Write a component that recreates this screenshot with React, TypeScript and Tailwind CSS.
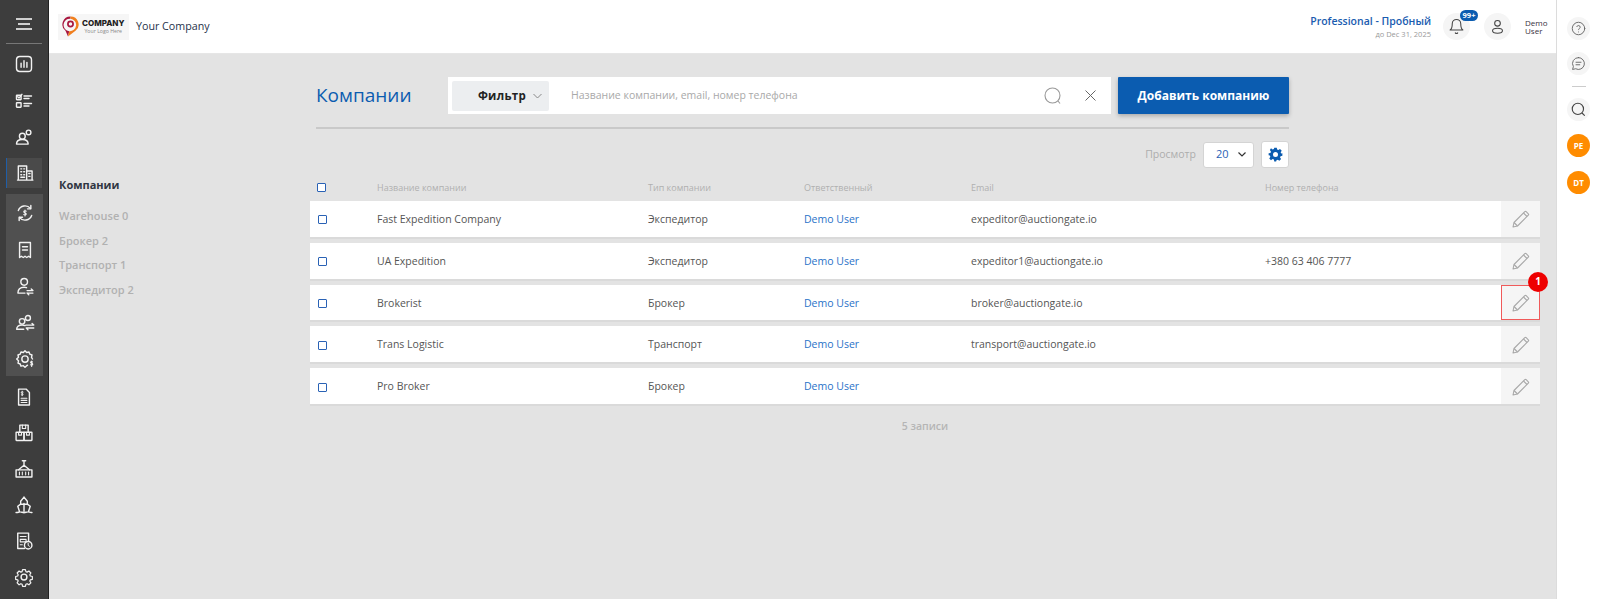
import React from "react";

const S = ({ children, size = 20, className = "" }: { children: React.ReactNode; size?: number; className?: string }) => (
  <svg width={size} height={size} viewBox="0 0 24 24" fill="none" stroke="currentColor" strokeWidth={1.7} strokeLinecap="round" strokeLinejoin="round" className={className}>
    {children}
  </svg>
);

const sideTop = [
  <S key="a"><rect x="3" y="3" width="18" height="18" rx="4" /><path d="M8.500 16v-5M12 16V8M15.500 16v-6" /></S>,
  <S key="b"><rect x="3" y="5" width="5.500" height="5.500" rx=".5" /><path d="M4.500 7l1.500 1.500L9.500 4M12 6h9M12 9h6" /><rect x="3" y="14" width="5.500" height="5.500" rx=".5" /><path d="M12 15h9M12 18h6" /></S>,
  <S key="c"><circle cx="10" cy="11" r="3.500" /><path d="M3 20.500c0-3.500 3-5.500 7-5.500s7 2 7 5.500z" /><circle cx="17.500" cy="6.500" r="2.800" /></S>,
];
const building = <S><path d="M4 20.500V3.500h10v17zM14 9.500h6.500v11H14M3 20.500h18.500" /><path d="M7 7h1M10.500 7h1M7 10.500h1M10.500 10.500h1M7 14h1M10.500 14h1M7 17h4.500M16.500 12.500h1.500M16.500 16h1.500" /></S>;
const group = [
  <S key="a"><path d="M4 9A8.500 8.500 0 0 1 18.500 6.500M20 15A8.500 8.500 0 0 1 5.500 17.500" /><path d="M19 3v4h-4M5 21v-4h4" /><path d="M13.500 9.700c-1-.7-3-.6-3 .8 0 1.500 3 .9 3 2.600 0 1.400-2 1.500-3 .8M12 8.500v7" strokeWidth={1.3} /></S>,
  <S key="b"><path d="M5.500 3h13v18l-2.200-1.500-2.200 1.500-2.100-1.500L9.900 21l-2.200-1.500L5.500 21z" /><path d="M9 8h6M9 12h6" /></S>,
  <S key="c"><circle cx="11" cy="7" r="4" /><path d="M3.500 20.500c0-4.500 3.200-7 7.500-7 1 0 2 .2 2.800.5M3.500 20.500h8.500M14.500 17.500h7M19.500 15.500l2 2M21.500 20.500h-7M16.500 22.500l-2-2" /></S>,
  <S key="d"><circle cx="8.500" cy="10" r="3.300" /><circle cx="15.500" cy="6" r="3" /><path d="M2 19.500c0-3 2.700-5.200 6.500-5.200 1.300 0 2.500.3 3.500.8M2 19.500h8.500M13 14.500h9.500M20.500 12.500l2 2M22.500 18h-9M15.500 20l-2-2" /></S>,
  <S key="e"><path d="M15 19.500l-1 .5-2 2-2-2-2.800.6-1-2.600-2.600-1 .6-2.800L2 12l2.200-2-.6-2.800 2.600-1 1-2.600 2.800.6L12 2l2 2.200 2.800-.6 1 2.600 2.600 1-.6 2.800L21 12" /><circle cx="12" cy="12" r="3.800" /><path d="M21 15.500c-.8-.6-2.300-.5-2.300.6 0 1.300 2.600.8 2.600 2.200 0 1.100-1.700 1.200-2.600.6M20 14.500v6.500" strokeWidth={1.3} /></S>,
];
const sideBottom = [
  <S key="a"><path d="M5.500 2.500h9l4 4V21.500h-13z" /><path d="M11 6c-.8-.5-2.300-.4-2.300.7 0 1.200 2.300.8 2.300 2 0 1-1.500 1.100-2.300.6M9.800 5v5.500" strokeWidth={1.1} /><path d="M8.500 13.500h7M8.500 16h7M8.500 18.500h7" strokeWidth={1.3} /></S>,
  <S key="b"><path d="M7 11V2.500h10V11" /><rect x="2.500" y="11" width="9.500" height="10" rx=".5" /><rect x="12" y="11" width="9.500" height="10" rx=".5" /><path d="M10 2.500v4h4v-4M5.500 11v3.500h3.500V11M15 11v3.500h3.500V11" strokeWidth={1.3} /></S>,
  <S key="c"><path d="M12 2V7.500M10 2h4M12 7.500L5.500 13M12 7.500L18.500 13" /><rect x="2.500" y="13" width="19" height="8.500" /><path d="M6.500 15.500V19M10 15.500V19M14 15.500V19M17.500 15.500V19" strokeWidth={1.3} /></S>,
  <S key="d"><path d="M12 2.500l4 5v3.500l3.500 2.500-2 6M12 2.500L8 7.500V11l-3.500 2.500 2 6M12 10v9.500M2.500 21c2 .5 3-.8 4.800-.8s3 1 4.700 1 3-1 4.700-1 2.800 1.300 4.800.8" /><path d="M8 11h8" /></S>,
  <S key="e"><path d="M17.500 12V2.500h-13V21h8" /><path d="M7.500 6.500h7M7.500 10h7v3h-7zM7.500 16.500h2.500" strokeWidth={1.3} /><circle cx="17" cy="17" r="4.500" /><path d="M17 14.800v2.500l1.500 1" strokeWidth={1.2} /></S>,
];
const gear = (
  <S size={20}>
    <circle cx="12" cy="12" r="3.500" />
    <path d="M10 2.500h4l.7 2.900 1.700.7 2.500-1.500 2.800 2.800-1.500 2.500.7 1.700 2.900.7v4l-2.900.7-.7 1.700 1.500 2.500-2.800 2.800-2.500-1.500-1.700.7-.7 2.900h-4l-.7-2.900-1.700-.7-2.500 1.500-2.800-2.800 1.500-2.500-.7-1.700-2.900-.7v-4l2.900-.7.7-1.700-1.500-2.500 2.800-2.800 2.500 1.500 1.700-.7z" transform="translate(12 12) scale(.85) translate(-12 -13)" />
  </S>
);

const Box = ({ className = "" }: { className?: string }) => (
  <span className={`block w-[9px] h-[9px] rounded-[1px] border border-[#2a62b5] bg-white ${className}`} />
);

const Pencil = () => (
  <svg width="19" height="19" viewBox="0 0 19 19" fill="none" stroke="#a8a8a8" strokeWidth="1.100" strokeLinejoin="round">
    <path d="M2 17l1-4.500L13.800 1.700a1 1 0 0 1 1.400 0l2.100 2.100a1 1 0 0 1 0 1.400L6.500 16z" />
    <path d="M3 12.500L6.500 16M12.500 3l3.500 3.500" />
  </svg>
);

const rows = [
  ["Fast Expedition Company", "Экспедитор", "expeditor@auctiongate.io", ""],
  ["UA Expedition", "Экспедитор", "expeditor1@auctiongate.io", "+380 63 406 7777"],
  ["Brokerist", "Брокер", "broker@auctiongate.io", ""],
  ["Trans Logistic", "Транспорт", "transport@auctiongate.io", ""],
  ["Pro Broker", "Брокер", "", ""],
];

const SideItem = ({ children, className = "h-[36.400px]" }: { children: React.ReactNode; className?: string }) => (
  <div className={`flex items-center justify-center ${className}`}>{children}</div>
);

const Round = ({ children, className = "" }: { children: React.ReactNode; className?: string }) => (
  <div className={`rounded-full flex items-center justify-center bg-[#f5f5f5] ${className}`}>{children}</div>
);

export default function App() {
  return (
    <div className="flex h-[599px] w-[1600px] overflow-hidden bg-[#e3e3e3] font-['Open_Sans',sans-serif] text-[#555]">
      {/* left nav */}
      <aside className="w-[49px] shrink-0 bg-[#3d3d3d] border-r border-[#222] flex flex-col text-[#f2f2f2]">
        <div className="h-[44px] pt-[4px] mx-[6px] border-b border-[#777] flex items-center justify-center">
          <svg width="16" height="12" viewBox="0 0 16 12" stroke="#fff" strokeWidth="1.300"><path d="M0 1h16M2 6h12M0 11h16" /></svg>
        </div>
        <div className="pt-[2px]">
          {sideTop.map((i, k) => (
            <SideItem key={k}>{i}</SideItem>
          ))}
        </div>
        <div className="h-[30px] w-[36px] ml-[6px] mt-[3px] bg-[#4a4a4a] border-l border-[#1f5ea8] flex items-center justify-center">{building}</div>
        <div className="mt-[6px] ml-[6px] w-[37px] h-[182px] bg-[#505050] pt-[1px]">
          {group.map((i, k) => (
            <SideItem key={k}>{i}</SideItem>
          ))}
        </div>
        <div className="pt-[3px]">
          {sideBottom.map((i, k) => (
            <SideItem key={k} className="h-[36px]">{i}</SideItem>
          ))}
          <SideItem className="h-[36px]">{gear}</SideItem>
        </div>
      </aside>

      {/* center */}
      <div className="flex-1 flex flex-col min-w-0">
        <header className="h-[54px] bg-white border-b border-[#e6e6e6] flex items-center shrink-0">
          <div className="ml-[9px] w-[71px] h-[26px] bg-[#f6f6f6] flex items-center pl-[4px] gap-[3px]">
            <svg width="17" height="21" viewBox="0 0 17 21">
              <path d="M8.500 .5A8 8 0 0 0 3.500 14.800L6 20.500l1.200-5.300a5 5 0 0 1 1.300-12.500z" fill="#a8173f" />
              <path d="M8.500 .5a8 8 0 0 1 5 14.300L6 20.500l1.200-5.300A5 5 0 0 0 8.500 2.700z" fill="#f07f1e" />
              <circle cx="8.500" cy="8" r="2.600" fill="none" stroke="#a8173f" strokeWidth="1.700" />
            </svg>
            <div className="flex flex-col items-center leading-none">
              <span className="font-['Inter',sans-serif] text-[8px] font-extrabold text-[#222] leading-[9px]">COMPANY</span>
              <span className="text-[5.200px] text-[#888] leading-[6px]">Your Logo Here</span>
            </div>
          </div>
          <span className="ml-[7px] text-[10.700px] text-[#26324a]">Your Company</span>
          <div className="ml-auto flex items-center">
            <div className="flex flex-col items-end mr-[12px]">
              <span className="text-[10.500px] font-semibold text-[#1a5cb0] leading-[15px]">Professional - Пробный</span>
              <span className="text-[7.500px] text-[#9a9a9a] leading-[11px]">до Dec 31, 2025</span>
            </div>
            <Round className="relative w-[27px] h-[27px] text-[#444]">
              <svg width="17" height="17" viewBox="0 0 24 24" fill="none" stroke="currentColor" strokeWidth="1.500" strokeLinecap="round" strokeLinejoin="round"><path d="M6 8a6 6 0 0 1 12 0c0 7 3 9 3 9H3s3-2 3-9" /><path d="M10.300 21a2 2 0 0 0 3.400 0" /></svg>
              <span className="absolute left-[17px] top-[-3px] w-[18px] h-[11px] rounded-full bg-[#0b5cb0] text-white text-[7.500px] font-bold leading-[11px] text-center">99+</span>
            </Round>
            <Round className="ml-[14px] w-[27px] h-[27px] text-[#444]">
              <svg width="17" height="17" viewBox="0 0 24 24" fill="none" stroke="currentColor" strokeWidth="1.500"><circle cx="12" cy="7.500" r="4" /><ellipse cx="12" cy="18" rx="7" ry="3.500" /></svg>
            </Round>
            <div className="ml-[14px] w-[31px] text-[8px] leading-[8px] text-[#3a3240]">Demo<br />User</div>
          </div>
        </header>

        <main className="flex-1 flex min-h-0">
          <nav className="w-[261px] shrink-0 pl-[10px] pt-[121px] text-[11px] font-semibold text-[#b1b1b1]">
            <div className="text-[#2f3542] font-bold h-[20px] leading-[20px] mb-[11px]">Компании</div>
            <div className="h-[24.500px] leading-[20px]">Warehouse 0</div>
            <div className="h-[24.500px] leading-[20px]">Брокер 2</div>
            <div className="h-[24.500px] leading-[20px]">Транспорт 1</div>
            <div className="h-[24.500px] leading-[20px]">Экспедитор 2</div>
          </nav>

          <section className="w-[1230px] shrink-0">
            <div className="ml-[6px] w-[973px] h-[75px] pt-[23px] border-b-2 border-[#c9c9c9] flex items-start">
              <h1 className="w-[132px] text-[19px] leading-[37px] text-[#0b5cb0] font-normal">Компании</h1>
              <div className="w-[663px] h-[37px] bg-white flex items-center pl-[4px] pr-[15px] text-[#8f8f8f]">
                <div className="w-[97px] h-[30px] bg-[#eceef0] rounded-[2px] flex items-center justify-end pr-[7px] gap-[7px]">
                  <span className="text-[11.500px] font-bold tracking-[0.3px] text-[#222]">Фильтр</span>
                  <svg width="9" height="6" viewBox="0 0 9 6" fill="none" stroke="#888"><path d="M.5 1l4 4 4-4" /></svg>
                </div>
                <span className="ml-[22px] text-[10.500px] text-[#a9a9a9]">Название компании, email, номер телефона</span>
                <svg className="ml-auto" width="18" height="18" viewBox="0 0 18 18" fill="none" stroke="#999" strokeWidth="1.100"><circle cx="8.500" cy="8.500" r="7.500" /><path d="M14 14l2 2.500" /></svg>
                <svg className="ml-[23px]" width="11" height="11" viewBox="0 0 11 11" fill="none" stroke="#666"><path d="M.5.500l10 10M10.500.500l-10 10" /></svg>
              </div>
              <button className="ml-[7px] w-[171px] h-[37px] bg-[#0b5cb0] rounded-[1px] text-white text-[12px] font-bold shadow-[0_2px_4px_rgba(0,0,0,0.25)]">Добавить компанию</button>
            </div>

            <div className="ml-[6px] w-[973px] flex items-center justify-end mt-[12px] h-[27px]">
              <span className="text-[10.500px] text-[#adadad] mr-[7px]">Просмотр</span>
              <div className="w-[51px] h-[26px] bg-white border border-[#d4d4d4] rounded-[3px] flex items-center pl-[12px] gap-[9px]">
                <span className="text-[11px] text-[#2a62b5]">20</span>
                <svg width="8" height="5" viewBox="0 0 8 5" fill="none" stroke="#333" strokeWidth="1.200"><path d="M.5.500L4 4 7.500.500" /></svg>
              </div>
              <div className="ml-[7px] w-[28px] h-[27px] bg-white border border-[#d4d4d4] rounded-[3px] flex items-center justify-center">
                <svg width="15" height="15" viewBox="0 0 24 24" fill="#0b5cb0"><path fillRule="evenodd" d="M10 1h4l.6 3.100a8 8 0 0 1 2 .8l2.600-1.800 2.800 2.800-1.800 2.600a8 8 0 0 1 .8 2L23 10v4l-3 .6a8 8 0 0 1-.8 2l1.800 2.600-2.800 2.800-2.600-1.800a8 8 0 0 1-2 .8L13 23h-3l-.6-3a8 8 0 0 1-2-.8l-2.600 1.800L2 18.200l1.800-2.600a8 8 0 0 1-.8-2L1 13v-3l3-.6a8 8 0 0 1 .8-2L3 4.800 4.800 2l2.600 1.800a8 8 0 0 1 2-.8zM12 8a4 4 0 1 0 0 8 4 4 0 0 0 0-8z" /></svg>
              </div>
            </div>

            <div className="flex items-center h-[33px] pt-[6px] pl-[7px] text-[9px] text-[#b0b0b0]">
              <div className="w-[60px]"><Box /></div>
              <div className="w-[271px]">Название компании</div>
              <div className="w-[156px]">Тип компании</div>
              <div className="w-[167px]">Ответственный</div>
              <div className="w-[294px]">Email</div>
              <div>Номер телефона</div>
            </div>

            <div className="flex flex-col gap-[4px]">
              {rows.map((r, i) => (
                <div key={i} className="flex h-[37.800px] bg-white border-b-2 border-[#dadada] text-[10.500px] text-[#555]">
                  <div className="flex-1 flex items-center pl-[7px] pt-[2px]">
                    <div className="w-[60px]"><Box className="ml-[1px]" /></div>
                    <div className="w-[271px]">{r[0]}</div>
                    <div className="w-[156px]">{r[1]}</div>
                    <div className="w-[167px] text-[#2a72c8]">Demo User</div>
                    <div className="w-[294px]">{r[2]}</div>
                    <div className="flex-1">{r[3]}</div>
                  </div>
                  <div className={`relative w-[39px] bg-[#f5f5f5] pt-[2px] flex items-center justify-center ${i === 2 ? "border border-[#f05a5a]" : ""}`}>
                    <Pencil />
                    {i === 2 && (
                      <span className="absolute left-[26px] top-[-14px] w-[20px] h-[20px] rounded-full bg-[#ee0000] text-white text-[10px] font-bold flex items-center justify-center">1</span>
                    )}
                  </div>
                </div>
              ))}
            </div>
            <div className="pt-[13px] text-center text-[10.500px] font-semibold text-[#b5b5b5]">5 записи</div>
          </section>
        </main>
      </div>

      {/* right rail */}
      <aside className="w-[44px] shrink-0 bg-white border-l border-[#dcdcdc] flex flex-col items-center pt-[17px]">
        <Round className="w-[23px] h-[23px] text-[#666]">
          <svg width="15" height="15" viewBox="0 0 24 24" fill="none" stroke="currentColor" strokeWidth="1.500" strokeLinecap="round"><circle cx="12" cy="12" r="10" /><path d="M9.300 9a2.800 2.800 0 0 1 5.400.9c0 1.900-2.700 2.400-2.700 4" /><path d="M12 17.500h.01" /></svg>
        </Round>
        <Round className="mt-[12px] w-[23px] h-[23px] text-[#666]">
          <svg width="15" height="15" viewBox="0 0 24 24" fill="none" stroke="currentColor" strokeWidth="1.500" strokeLinecap="round" strokeLinejoin="round"><path d="M12 2.500a9.500 9.500 0 1 1-4.500 17.900L2.500 21.500l1.300-4.600A9.500 9.500 0 0 1 12 2.500z" /><path d="M8 10h8M8 14h6" /></svg>
        </Round>
        <div className="mt-[11px] w-[14px] border-t border-[#ccc]" />
        <Round className="mt-[11px] w-[23px] h-[23px] text-[#444]">
          <svg width="15" height="15" viewBox="0 0 24 24" fill="none" stroke="currentColor" strokeWidth="1.800" strokeLinecap="round"><circle cx="11" cy="11" r="9" /><path d="M18 18l3.500 3.500" /></svg>
        </Round>
        <div className="mt-[13px] w-[23px] h-[23px] rounded-full bg-[#ff8c00] text-white text-[8px] font-bold flex items-center justify-center">PE</div>
        <div className="mt-[14px] w-[23px] h-[23px] rounded-full bg-[#ff8c00] text-white text-[8px] font-bold flex items-center justify-center">DT</div>
      </aside>
    </div>
  );
}
